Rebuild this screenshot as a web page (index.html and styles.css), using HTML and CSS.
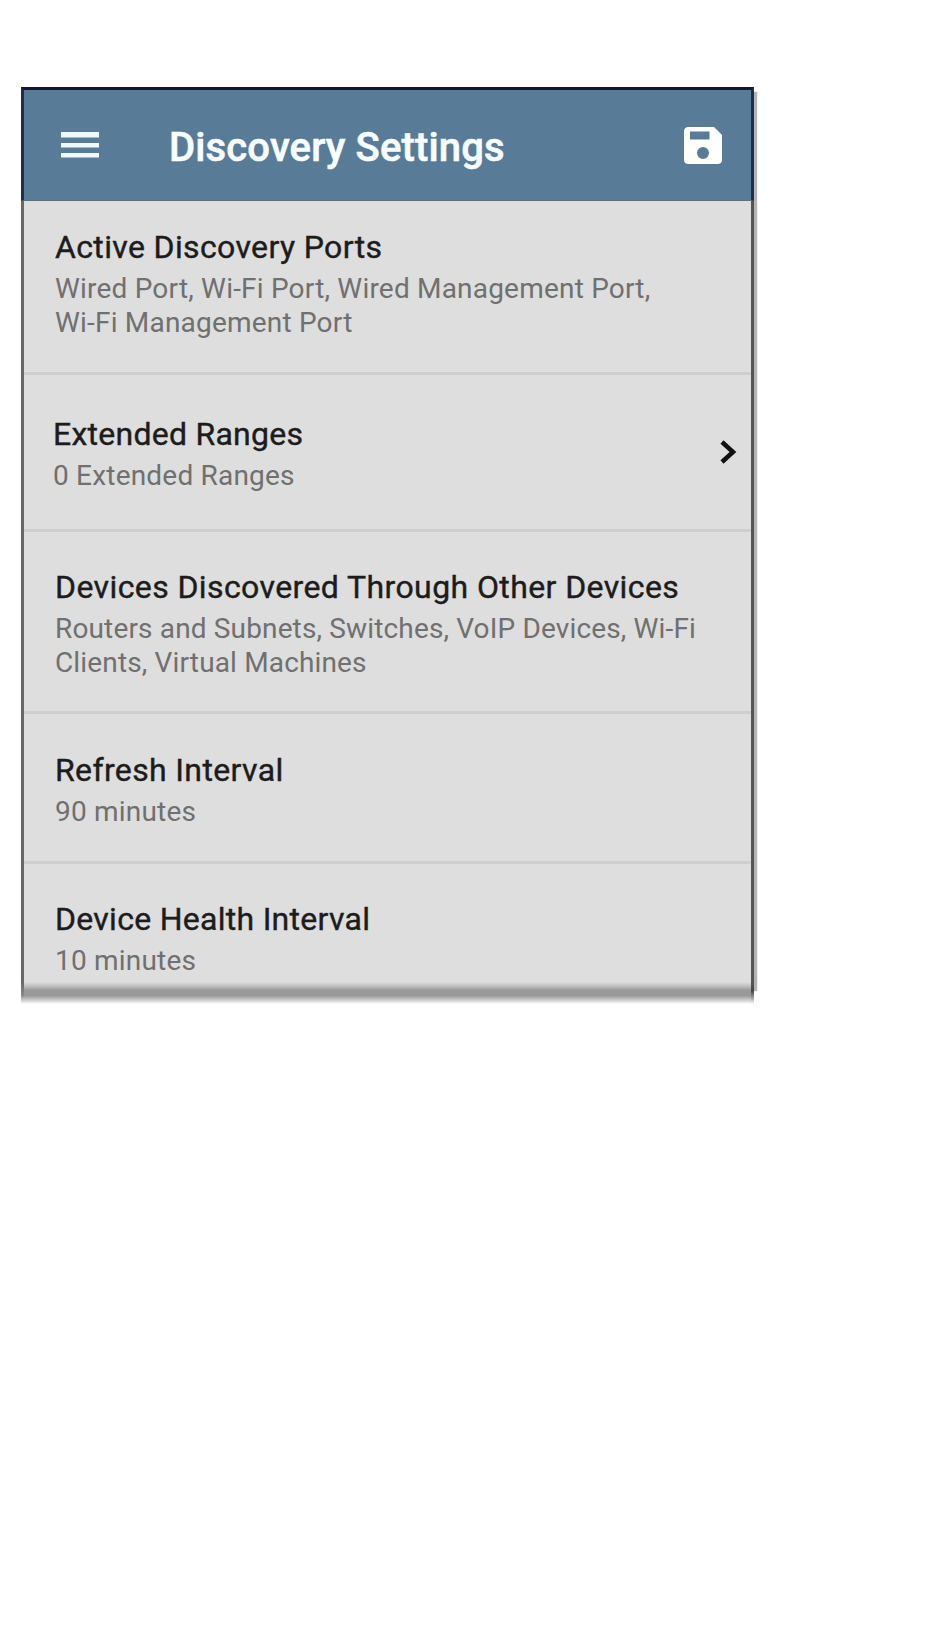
FILE: index.html
```html
<!DOCTYPE html>
<html lang="en">
<head>
<meta charset="utf-8">
<title>Discovery Settings</title>
<link rel="stylesheet" href="styles.css">
</head>
<body>
<main class="panel">
  <header class="bar">
    <svg class="menu" width="38" height="28" viewBox="0 0 38 28" fill="#eef8ff"><path d="M0 1h38v5.500H0zM0 12h38v4.500H0zM0 22h38v4.500H0z"/></svg>
    <h1 class="heading"><span>Discovery Settings</span></h1>
    <svg class="save" width="38" height="37" viewBox="0 0 38 37"><path fill="#fff" fill-rule="evenodd" d="M4.500 0H30L38 8V32.500Q38 37 33.500 37H4.500Q0 37 0 32.500V4.500Q0 0 4.500 0ZM6 4.500V12.500H25.500V4.500ZM19 20A6 6 0 1 0 19 32A6 6 0 1 0 19 20Z"/></svg>
  </header>
  <section class="row ports">
    <h2 class="title"><span>Active Discovery Ports</span></h2>
    <p class="sub"><span>Wired Port, Wi-Fi Port, Wired Management Port,</span><br><span>Wi-Fi Management Port</span></p>
  </section>
  <section class="row ranges">
    <div>
      <h2 class="title"><span>Extended Ranges</span></h2>
      <p class="sub"><span>0 Extended Ranges</span></p>
    </div>
    <svg class="chevron" width="17" height="24" viewBox="0 0 17 24" fill="none" stroke="#111" stroke-width="4.500"><path d="M2 2L13 12L2 22"/></svg>
  </section>
  <section class="row devices">
    <h2 class="title"><span>Devices Discovered Through Other Devices</span></h2>
    <p class="sub"><span>Routers and Subnets, Switches, VoIP Devices, Wi-Fi</span><br><span>Clients, Virtual Machines</span></p>
  </section>
  <section class="row refresh">
    <h2 class="title"><span>Refresh Interval</span></h2>
    <p class="sub"><span>90 minutes</span></p>
  </section>
  <section class="row health">
    <h2 class="title"><span>Device Health Interval</span></h2>
    <p class="sub"><span>10 minutes</span></p>
  </section>
  <div class="edge"></div>
</main>
</body>
</html>
```
FILE: styles.css
```css
* { box-sizing: border-box; }
body { margin: 0; padding: 87px 0 0 21px; background: #fff; font-family: Roboto, "Liberation Sans", sans-serif; }
h1, h2, p { margin: 0; white-space: nowrap; }
.panel { width: 733px; height: 917px; display: flex; flex-direction: column; background: #dedede; border-left: 3px solid #686868; border-right: 3px solid #555; box-shadow: 12px -4px 1px -9px #b4b4b4; }
.bar { height: 114px; flex: none; margin: 0 -3px; display: flex; align-items: flex-start; background: #587b98; border: 3px solid #1c3148; border-top-color: #0c1a2c; border-bottom: 1px solid #58727f; }
.menu { margin: 41px 0 0 37px; }
.heading { margin: 30px 0 0 70px; width: 486px; font-size: 40px; line-height: 56px; letter-spacing: .14px; font-weight: 500; color: #f8fdff; -webkit-text-stroke: .6px #f8fdff; }
.save { margin: 37px 0 0 29px; }
.row { flex: none; border-bottom: 3px solid #cecece; padding-left: 31px; }
.title { font-size: 32px; line-height: 40px; letter-spacing: .36px; font-weight: 400; color: #1c1c1c; -webkit-text-stroke: .4px #1c1c1c; }
.sub { margin-top: 5px; font-size: 28px; line-height: 34px; letter-spacing: .2px; color: #707070; }
.ports { height: 174px; padding-top: 26px; }
.ranges { height: 157px; padding: 39px 14px 0 29px; display: flex; justify-content: space-between; }
.ranges .title { letter-spacing: .25px; }
.chevron { margin-top: 26px; }
.devices { height: 182px; padding-top: 35px; }
.devices .title { letter-spacing: .4px; }
.devices .sub { letter-spacing: .15px; }
.refresh { height: 150px; padding-top: 36px; }
.health { height: 118px; padding-top: 35px; border-bottom: 0; }
.health .title { letter-spacing: .28px; }
.edge {
  flex: 1;
  margin: 0 -3px;
  background:
    linear-gradient(#686868, #888 60%, #fff) left / 3px 100% no-repeat,
    linear-gradient(#555, #444 40%, #999 70%, #fff) right / 3px 100% no-repeat,
    linear-gradient(#dedede, #bdbdbd 20%, #999 38%, #999 62%, #ccc 82%, #fff);
}
```
